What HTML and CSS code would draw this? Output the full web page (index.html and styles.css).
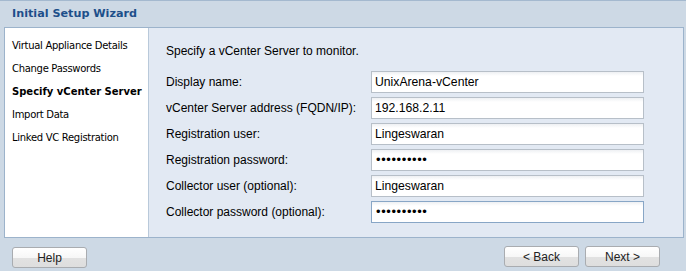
FILE: index.html
```html
<!DOCTYPE html>
<html>
<head>
<meta charset="utf-8">
<link rel="stylesheet" href="styles.css">
</head>
<body>
<div class="wizard">
  <div class="header"><span class="title">Initial Setup Wizard</span></div>
  <div class="main">
    <ul class="nav">
      <li>Virtual Appliance Details</li>
      <li>Change Passwords</li>
      <li class="active">Specify vCenter Server</li>
      <li>Import Data</li>
      <li>Linked VC Registration</li>
    </ul>
    <div class="content">
      <p class="intro">Specify a vCenter Server to monitor.</p>
      <div class="form">
        <label class="lbl">Display name:</label>
        <div class="field">UnixArena-vCenter</div>
        <label class="lbl">vCenter Server address (FQDN/IP):</label>
        <div class="field">192.168.2.11</div>
        <label class="lbl">Registration user:</label>
        <div class="field">Lingeswaran</div>
        <label class="lbl">Registration password:</label>
        <div class="field dots">&#x2022;&#x2022;&#x2022;&#x2022;&#x2022;&#x2022;&#x2022;&#x2022;&#x2022;&#x2022;</div>
        <label class="lbl">Collector user (optional):</label>
        <div class="field">Lingeswaran</div>
        <label class="lbl">Collector password (optional):</label>
        <div class="field dots focus">&#x2022;&#x2022;&#x2022;&#x2022;&#x2022;&#x2022;&#x2022;&#x2022;&#x2022;&#x2022;</div>
      </div>
    </div>
  </div>
  <div class="footer">
    <button class="btn">Help</button>
    <div class="spacer"></div>
    <button class="btn">&lt; Back</button>
    <button class="btn">Next &gt;</button>
  </div>
</div>
</body>
</html>
```
FILE: styles.css
```css
html, body {
  margin: 0;
  padding: 0;
}
body {
  background: #cdd9e5;
  width: 686px;
  height: 271px;
  overflow: hidden;
  font-family: "Liberation Sans", Arial, sans-serif;
  font-size: 12px;
  color: #000;
}
.wizard {
  border-top: 1px solid #a4b9cf;
  height: 270px;
  display: flex;
  flex-direction: column;
}
.header {
  height: 26px;
  display: flex;
  align-items: center;
  padding-left: 12px;
}
.title {
  font-family: "DejaVu Sans", Verdana, sans-serif;
  font-weight: bold;
  font-size: 11.2px;
  color: #1d4f8a;
  padding-bottom: 1px;
}
.main {
  margin: 0 2px 0 4px;
  height: 209px;
  border: 1px solid #9cb3cb;
  display: flex;
}
.nav {
  list-style: none;
  margin: 0;
  padding: 6px 0 0 7px;
  width: 136px;
  background: #fff;
  border-right: 1px solid #b9c9da;
  font-family: "DejaVu Sans", Verdana, sans-serif;
  font-size: 10px;
  letter-spacing: -0.3px;
}
.nav li {
  height: 23px;
  line-height: 23px;
  white-space: nowrap;
}
.nav li.active {
  font-weight: bold;
  letter-spacing: 0;
}
.content {
  flex: 1;
  background: #e2e9f3;
  padding: 13px 0 0 17px;
}
.intro {
  margin: 0 0 10px 0;
  height: 20px;
  line-height: 20px;
}
.form {
  display: grid;
  grid-template-columns: 205px 273px;
  grid-auto-rows: 22px;
  row-gap: 4px;
  align-items: center;
}
.lbl {
  line-height: 22px;
}
.field {
  box-sizing: border-box;
  height: 22px;
  border: 1px solid #b7bfc8;
  background: linear-gradient(#eef0f3 0, #ffffff 4px, #ffffff 100%);
  padding-left: 3px;
  line-height: 20px;
  font-size: 12.2px;
  white-space: nowrap;
}
.field.dots {
  font-size: 13px;
  letter-spacing: 0.6px;
  padding-left: 4px;
}
.field.focus {
  border-color: #88a6c6;
}
.footer {
  flex: 1;
  display: flex;
  align-items: flex-start;
  padding: 8px 0 0 12px;
  gap: 6px;
}
.spacer {
  flex: 1;
}
.btn {
  width: 75px;
  height: 21px;
  margin: 0;
  padding: 0;
  border: 1px solid #a9acb0;
  border-radius: 3px;
  background: linear-gradient(#ffffff 0, #f7f7f7 50%, #e1e1e1 55%, #dedede 100%);
  font-family: "Liberation Sans", Arial, sans-serif;
  font-size: 12px;
  color: #222;
}
.btn:last-child {
  margin-right: 26px;
}
.footer .btn:first-child {
  margin-top: 1px;
}
```
